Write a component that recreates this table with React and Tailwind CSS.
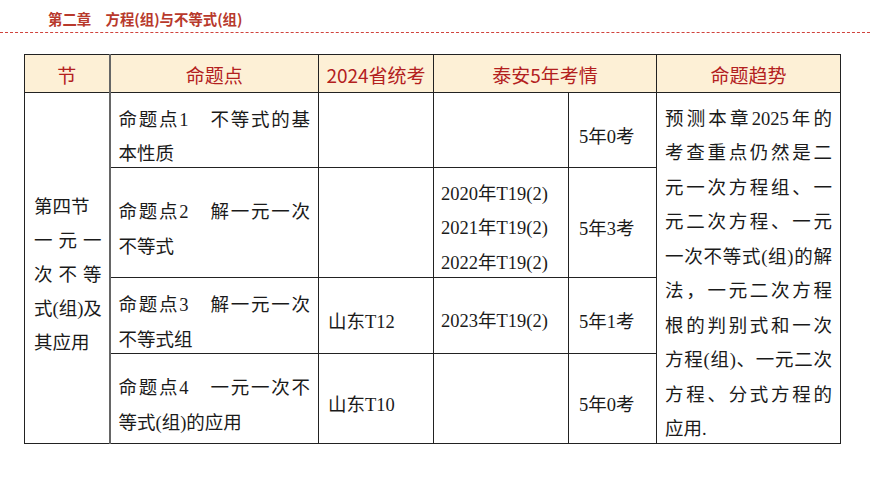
const serif = { fontFamily: '"Liberation Serif", "Noto Sans CJK SC", serif' };

function Line({ text, justify }) {
    return (
        <div className={justify ? 'text-justify [text-align-last:justify] whitespace-nowrap' : 'whitespace-nowrap'}>
            {text}
        </div>
    );
}

function Lines({ lines }) {
    return (
        <>
            {lines.map((l, i) => (
                <Line key={i} text={l[0]} justify={l[1]} />
            ))}
        </>
    );
}

function Nudge({ children, className = 'translate-y-[7px]' }) {
    return <div className={className}>{children}</div>;
}

const topics = [
    { lines: [['命题点1　不等式的基', true], ['本性质', false]], exam: '', years: [], count: '5年0考', h: 'h-[75px]' },
    { lines: [['命题点2　解一元一次', true], ['不等式', false]], exam: '', years: ['2020年T19(2)', '2021年T19(2)', '2022年T19(2)'], count: '5年3考', h: 'h-[110px]' },
    { lines: [['命题点3　解一元一次', true], ['不等式组', false]], exam: '山东T12', years: ['2023年T19(2)'], count: '5年1考', h: 'h-[76px]' },
    { lines: [['命题点4　一元一次不', true], ['等式(组)的应用', false]], exam: '山东T10', years: [], count: '5年0考', h: 'h-[90px]' },
];

const trend = [
    ['预测本章2025年的', true],
    ['考查重点仍然是二', true],
    ['元一次方程组、一', true],
    ['元二次方程、一元', true],
    ['一次不等式(组)的解', true],
    ['法，一元二次方程', true],
    ['根的判别式和一次', true],
    ['方程(组)、一元二次', true],
    ['方程、分式方程的', true],
    ['应用.', false],
];

const section = [
    ['第四节', false],
    ['一 元 一', true],
    ['次 不 等', true],
    ['式(组)及', true],
    ['其应用', false],
];

const th = 'border border-[#222] bg-[#fdf0d6] text-[#b3201e] font-normal text-[19px] text-center align-middle';
const td = 'border border-[#222] align-middle text-[18.5px] leading-[34.5px] text-[#1a1a1a]';

export default function App() {
    return (
        <div className="w-[870px] h-[489px] bg-white overflow-hidden">
            {/* Chapter title */}
            <div className="h-[33px] border-b border-dashed border-[#d0433d] pl-[48px] pt-[7px]">
                <span
                    className="text-[14.4px] font-bold text-[#b8392c] leading-[18px]"
                    style={{ fontFamily: '"Noto Sans CJK SC", sans-serif' }}
                >
                    第二章　方程(组)与不等式(组)
                </span>
            </div>

            <div className="pl-[24px] pt-[21px]">
                <table className="table-fixed border-collapse w-[816px]" style={serif}>
                    <colgroup>
                        <col className="w-[85px]" />
                        <col className="w-[209px]" />
                        <col className="w-[115px]" />
                        <col className="w-[135px]" />
                        <col className="w-[88px]" />
                        <col className="w-[184px]" />
                    </colgroup>
                    <thead style={{ fontFamily: '"Noto Sans CJK SC", sans-serif' }}>
                        <tr className="h-[38px]">
                            <th className={th}><Nudge className="translate-y-[2px]">节</Nudge></th>
                            <th className={th + ' border-l-2 border-l-[#666]'}><Nudge className="translate-y-[2px]">命题点</Nudge></th>
                            <th className={th}><Nudge className="translate-y-[2px]">2024省统考</Nudge></th>
                            <th className={th} colSpan={2}><Nudge className="translate-y-[2px]">泰安5年考情</Nudge></th>
                            <th className={th}><Nudge className="translate-y-[2px]">命题趋势</Nudge></th>
                        </tr>
                    </thead>
                    <tbody>
                        {topics.map((t, i) => (
                            <tr key={i} className={t.h}>
                                {i === 0 && (
                                    <td className={td + ' pl-[9px] pr-[7px] leading-[34px]'} rowSpan={4}>
                                        <Nudge><Lines lines={section} /></Nudge>
                                    </td>
                                )}
                                <td className={td + ' pl-[8px] pr-[8px] border-l-2 border-l-[#666]'}>
                                    <Nudge><Lines lines={t.lines} /></Nudge>
                                </td>
                                <td className={td + ' pl-[9px]'}>
                                    <Nudge>{t.exam}</Nudge>
                                </td>
                                <td className={td + ' pl-[7px]'}>
                                    <Nudge className="translate-y-[6px]">
                                        {t.years.map((y) => (
                                            <div key={y}>{y}</div>
                                        ))}
                                    </Nudge>
                                </td>
                                <td className={td + ' pl-[10px]'}>
                                    <Nudge>{t.count}</Nudge>
                                </td>
                                {i === 0 && (
                                    <td className={td + ' pl-[8px] pr-[8px] leading-[34.4px]'} rowSpan={4}>
                                        <Nudge className="translate-y-[6px]"><Lines lines={trend} /></Nudge>
                                    </td>
                                )}
                            </tr>
                        ))}
                    </tbody>
                </table>
            </div>
        </div>
    );
}
